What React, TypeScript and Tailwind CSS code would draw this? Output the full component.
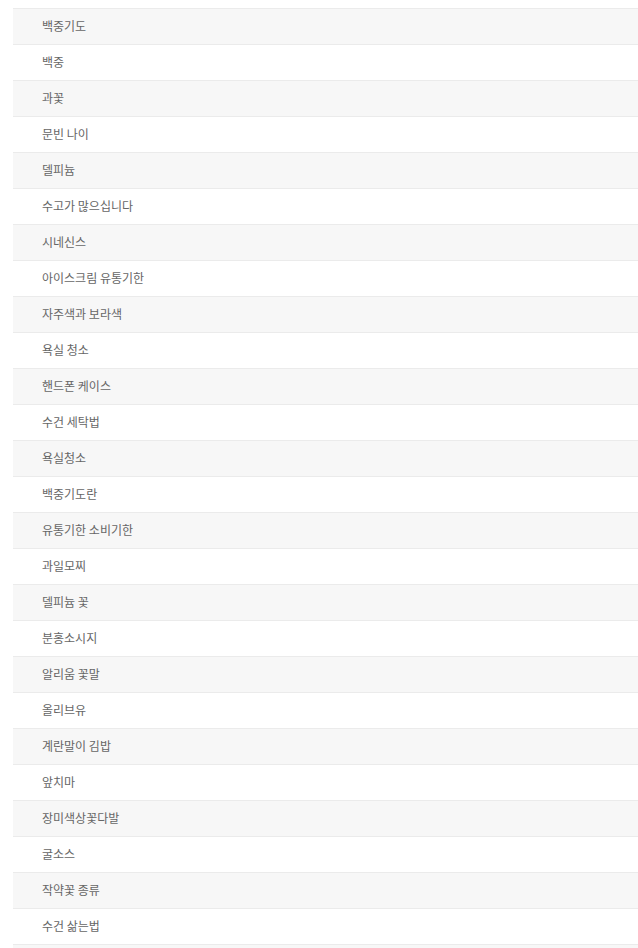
import React from 'react';

const items = [
  '백중기도',
  '백중',
  '과꽃',
  '문빈 나이',
  '델피늄',
  '수고가 많으십니다',
  '시네신스',
  '아이스크림 유통기한',
  '자주색과 보라색',
  '욕실 청소',
  '핸드폰 케이스',
  '수건 세탁법',
  '욕실청소',
  '백중기도란',
  '유통기한 소비기한',
  '과일모찌',
  '델피늄 꽃',
  '분홍소시지',
  '알리움 꽃말',
  '올리브유',
  '계란말이 김밥',
  '앞치마',
  '장미색상꽃다발',
  '굴소스',
  '작약꽃 종류',
  '수건 삶는법',
  '',
];

export default function App() {
  return (
    <div className="min-h-screen bg-white pt-[8px] pl-[13px]">
      <ul className="border-b border-[#ebebeb]">
        {items.map((item, i) => (
          <li
            key={i}
            className={`flex h-[36px] items-center border-t border-[#ebebeb] pl-[29px] pb-[1px] text-[12px] text-[#666] ${
              i % 2 === 0 ? 'bg-[#f7f7f7]' : 'bg-white'
            }`}
            style={{ fontFamily: '"Noto Sans CJK KR", "Noto Sans", sans-serif' }}
          >
            {item}
          </li>
        ))}
      </ul>
    </div>
  );
}
